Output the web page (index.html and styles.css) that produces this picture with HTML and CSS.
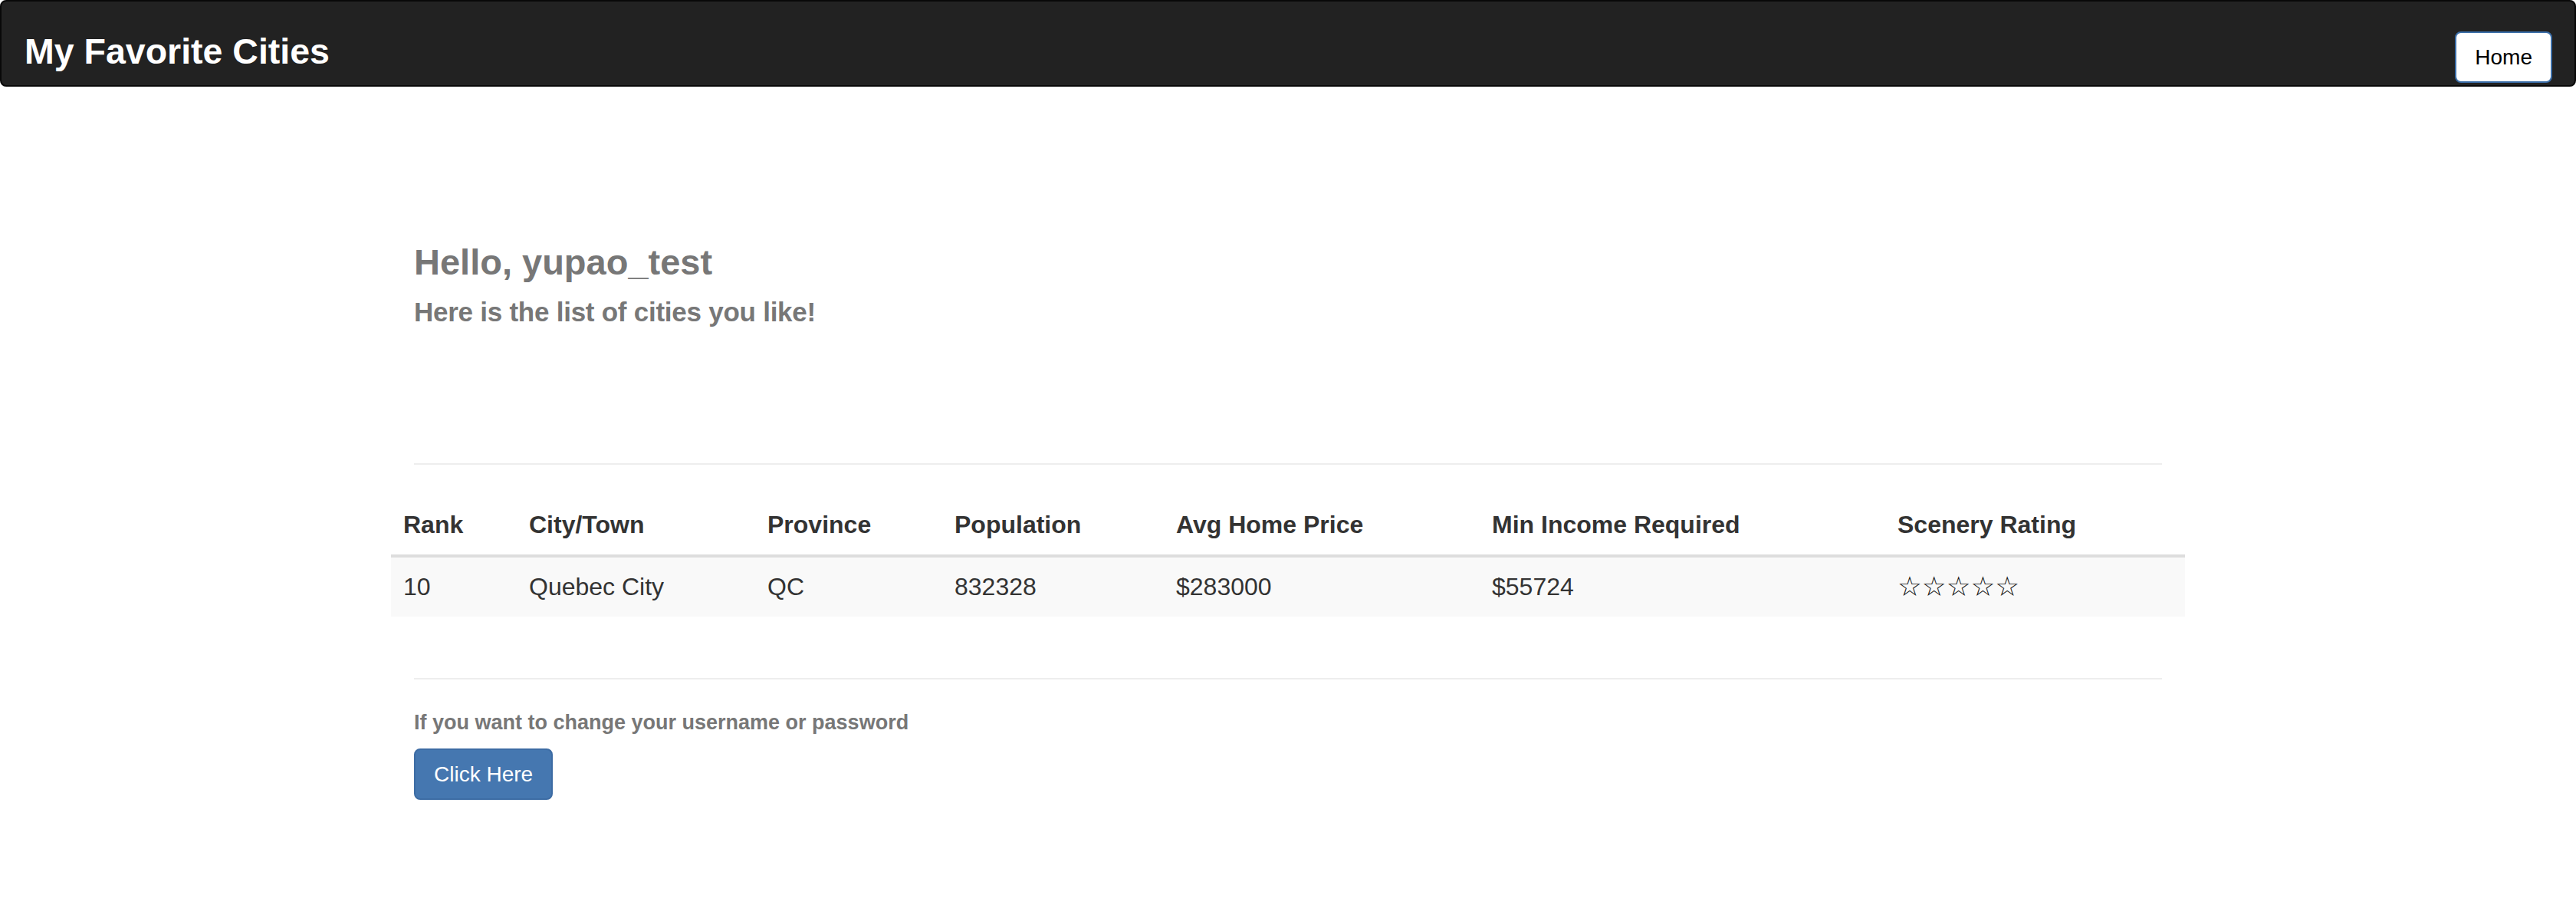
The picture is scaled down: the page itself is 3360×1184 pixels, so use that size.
FILE: index.html
```html
<!DOCTYPE html>
<html lang="en">
<head>
<meta charset="utf-8">
<title>My Favorite Cities</title>
<link rel="stylesheet" href="styles.css">
</head>
<body>
<nav class="navbar">
  <a class="brand" href="#">My Favorite Cities</a>
  <a class="btn btn-default" href="#">Home</a>
</nav>
<main class="container">
  <section class="intro">
    <h3 class="hello">Hello, yupao_test</h3>
    <h4 class="sub">Here is the list of cities you like!</h4>
  </section>
  <hr class="rule rule-top">
  <div class="table-wrap">
    <table class="cities">
      <colgroup>
        <col class="c-rank"><col class="c-city"><col class="c-prov"><col class="c-pop"><col class="c-price"><col class="c-income"><col class="c-scenery">
      </colgroup>
      <thead>
        <tr>
          <th>Rank</th><th>City/Town</th><th>Province</th><th>Population</th><th>Avg Home Price</th><th>Min Income Required</th><th>Scenery Rating</th>
        </tr>
      </thead>
      <tbody>
        <tr>
          <td>10</td><td>Quebec City</td><td>QC</td><td>832328</td><td>$283000</td><td>$55724</td><td><span class="stars">☆☆☆☆☆</span></td>
        </tr>
      </tbody>
    </table>
  </div>
  <hr class="rule rule-bottom">
  <p class="note">If you want to change your username or password</p>
  <a class="btn btn-primary" href="#">Click Here</a>
</main>
</body>
</html>
```

FILE: styles.css
```css
* { box-sizing: border-box; }
html, body { margin: 0; padding: 0; background: #fff; }
body {
  font-family: "Liberation Sans", Arial, Helvetica, sans-serif;
  font-size: 28px;
  line-height: 1.42857;
  color: #333;
}
a { text-decoration: none; }

.navbar {
  height: 113px;
  background: #222;
  border: 2px solid #080808;
  border-radius: 8px;
  display: flex;
  justify-content: space-between;
  align-items: flex-start;
  padding: 40px 29px 0 30px;
}
.brand {
  color: #fff;
  font-size: 46.5px;
  font-weight: bold;
  line-height: 1.1;
}
.btn {
  display: inline-block;
  font-size: 28px;
  line-height: 40px;
  padding: 12px 24px 11px;
  border: 2px solid transparent;
  border-radius: 8px;
  white-space: nowrap;
}
.navbar .btn { margin-top: -1px; }
.btn-default {
  background: #fff;
  color: #000;
  border-color: #3b6ea8;
}
.btn-primary {
  background: #4577b0;
  color: #fff;
  border-color: #3d6ca4;
}

.container {
  width: 2340px;
  margin: 0 auto;
  padding: 0 30px;
}
.intro { padding: 203px 0 178px; }
.hello {
  margin: 0 0 20px;
  font-size: 47px;
  line-height: 1.1;
  font-weight: bold;
  color: #777;
}
.sub {
  margin: 0;
  font-size: 35px;
  line-height: 1.1;
  font-weight: bold;
  letter-spacing: -0.25px;
  color: #777;
}
.rule {
  border: 0;
  border-top: 2px solid #eee;
  height: 0;
}
.rule-top { margin: 0 0 40px; }
.rule-bottom { margin: 0 0 37px; }

.table-wrap { margin: 0 -30px 80px; }
.cities {
  width: 100%;
  border-collapse: collapse;
  table-layout: fixed;
  font-size: 32px;
}
.c-rank { width: 164px; }
.c-city { width: 311px; }
.c-prov { width: 244px; }
.c-pop { width: 289px; }
.c-price { width: 412px; }
.c-income { width: 529px; }
.c-scenery { width: 391px; }
.cities th {
  text-align: left;
  font-weight: bold;
  padding: 16px;
  line-height: 45px;
  border-bottom: 4px solid #ddd;
  vertical-align: bottom;
  white-space: nowrap;
}
.cities td {
  padding: 15px 16px;
  line-height: 45px;
  background: #f9f9f9;
  white-space: nowrap;
}
.stars {
  font-family: "DejaVu Sans", sans-serif;
  font-size: 35.5px;
  color: #111;
}
.note {
  margin: 0 0 14px;
  font-size: 27px;
  font-weight: bold;
  color: #777;
}
```
